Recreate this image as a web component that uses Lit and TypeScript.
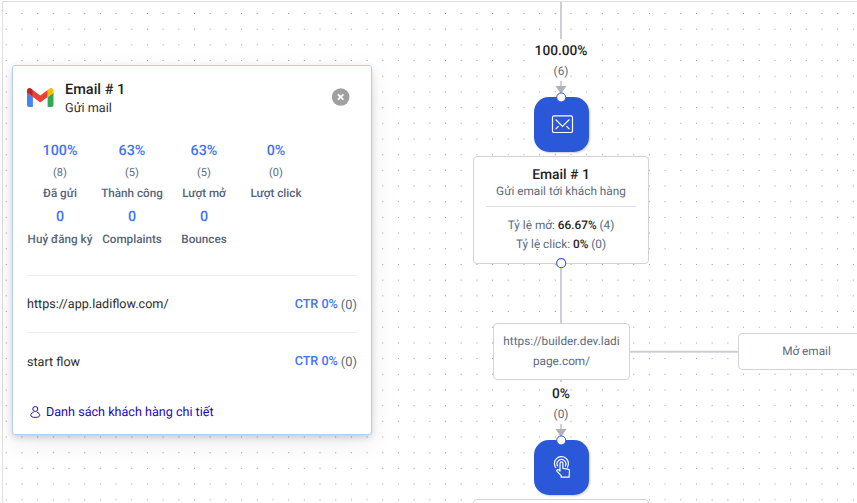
import { LitElement, html, css, svg } from "lit";
import { customElement } from "lit/decorators.js";

const STEP = 15.686;

function dotPath(): string {
  let d = "";
  for (let r = 0; r < 32; r++) {
    for (let c = 0; c < 55; c++) {
      d += `M${(5.8 + c * STEP).toFixed(2)} ${(13.5 + r * STEP).toFixed(2)}h1`;
    }
  }
  return d;
}

const STATS = [
  { value: "100%", count: "(8)", label: "Đã gửi" },
  { value: "63%", count: "(5)", label: "Thành công" },
  { value: "63%", count: "(5)", label: "Lượt mở" },
  { value: "0%", count: "(0)", label: "Lượt click" },
];
const TOTALS = [
  { value: "0", label: "Huỷ đăng ký" },
  { value: "0", label: "Complaints" },
  { value: "0", label: "Bounces" },
];
const LINKS = ["https://app.ladiflow.com/", "start flow"];

@customElement("stats-panel")
class StatsPanel extends LitElement {
  static styles = css`
    :host {
      display: block;
      box-sizing: border-box;
      width: 360px;
      height: 370px;
      padding: 0 14px;
      border: 1px solid #b5cdfb;
      border-radius: 3px;
      background: #fff;
      box-shadow: 0 3px 7px -1px rgba(50, 60, 90, 0.25), 0 8px 28px rgba(0, 0, 0, 0.07);
    }
    .head { display: flex; height: 62px; align-items: center; }
    .logo { width: 26.5px; height: 20px; margin: 0 11.5px 1px 0; }
    .titles { flex: 1; padding-top: 4px; }
    .title { font-size: 14.5px; font-weight: 500; line-height: 18px; color: #1e1e1e; }
    .sub { font-size: 12.7px; line-height: 19px; color: #333; }
    .close { width: 18px; height: 18px; margin-right: 7px; }
    .row { display: grid; grid-template-columns: repeat(4, 72px); justify-content: start; margin-left: -3px; text-align: center; }
    .first { padding-top: 12px; }
    .value { font-size: 14.3px; font-weight: 500; line-height: 22px; color: #3f74f6; }
    .count { font-size: 11px; line-height: 22px; color: #5b6b80; }
    .label { font-size: 11.7px; font-weight: 500; line-height: 20px; color: #56657a; white-space: nowrap; }
    .first .label { line-height: 19px; }
    .totals { padding-top: 3px; }
    .totals .label { line-height: 23px; }
    .link { display: flex; height: 56px; align-items: center; justify-content: space-between; border-top: 1px solid #ededed; font-size: 12.6px; color: #2b2b2b; }
    .link > span { padding-top: 1px; }
    .link:last-child > .name { padding-top: 3px; }
    .links { margin-top: 24px; }
    .ctr { display: flex; align-items: center; gap: 3px; color: #5b6b80; }
    .ctr b { font-weight: 500; line-height: 16px; color: #3f74f6; }
    .ctr .n { padding-top: 2px; line-height: 16px; font-size: 12.9px; }
    .detail { display: flex; align-items: center; height: 18px; margin-top: 14px; padding-left: 2px; gap: 4px; font-size: 12.6px; color: #1c07b8; }
    .detail svg { width: 13px; height: 14px; }
  `;
  render() {
    return html`
      <div class="head">
        <svg class="logo" viewBox="0 0 27 21" preserveAspectRatio="none">
          <path d="M0 6l6 4.500V21H2a2 2 0 0 1-2-2z" fill="#4285f4" />
          <path d="M27 6l-6 4.500V21h4a2 2 0 0 0 2-2z" fill="#34a853" />
          <path d="M21 3.200L23 1.600c1.700-1.300 4-.1 4 2V6l-6 4.600z" fill="#fbbc04" />
          <path d="M6 3.200l7.500 5.700L21 3.200v7.400l-7.500 5.600L6 10.600z" fill="#ea4335" />
          <path d="M6 3.200L4 1.600C2.300.3 0 1.500 0 3.600V6l6 4.600z" fill="#c5221f" />
        </svg>
        <div class="titles">
          <div class="title">Email # 1</div>
          <div class="sub">Gửi mail</div>
        </div>
        <svg class="close" viewBox="0 0 18 18">
          <circle cx="8.700" cy="9" r="8.800" fill="#a0a0a0" />
          <path d="M6 6.300l5.400 5.400m0-5.400l-5.400 5.400" stroke="#fff" stroke-width="1.800" />
        </svg>
      </div>
      <div class="row first">
        ${STATS.map((s) => html`<div>
          <div class="value">${s.value}</div>
          <div class="count">${s.count}</div>
          <div class="label">${s.label}</div>
        </div>`)}
      </div>
      <div class="row totals">
        ${TOTALS.map((s) => html`<div>
          <div class="value">${s.value}</div>
          <div class="label">${s.label}</div>
        </div>`)}
      </div>
      <div class="links">
        ${LINKS.map((l) => html`<div class="link"><span class="name">${l}</span><span class="ctr"><b>CTR 0%</b><span class="n">(0)</span></span></div>`)}
      </div>
      <div class="detail">
        <svg viewBox="0 0 13 14" fill="none" stroke="#1c07b8">
          <circle cx="6.300" cy="4" r="2.500" />
          <path d="M4.600 7.200C3 7.800 1.800 8.900 1.800 10.300c0 2.800 9 2.800 9 0 0-1.400-1.200-2.500-2.800-3.100" />
        </svg>
        <span>Danh sách khách hàng chi tiết</span>
      </div>
    `;
  }
}

@customElement("app-root")
class AppRoot extends LitElement {
  static styles = css`
    :host {
      display: block;
      position: relative;
      width: 857px;
      height: 503px;
      overflow: hidden;
      background: #fff;
      font-family: Roboto, "Liberation Sans", sans-serif;
      text-rendering: geometricPrecision;
    }
    .board, .panel, .node, .tile, .branch { position: absolute; }
    .board { left: 0; top: 0; width: 857px; height: 503px; }
    .panel { left: 12px; top: 65px; }
    .node { box-sizing: border-box; background: #fff; border: 1px solid #d0d4da; border-radius: 4px; text-align: center; font-size: 11.8px; color: #5b6b80; }
    .mail { left: 473px; top: 155.5px; width: 176px; height: 108px; padding: 9px 12px 0; }
    .mail h3 { margin: 0; font-size: 13.9px; font-weight: 500; line-height: 18px; color: #1e1e1e; }
    .mail .desc { line-height: 15px; padding-bottom: 7px; border-bottom: 1px solid #dcdfe3; }
    .rates { padding-top: 9px; line-height: 19px; }
    .rates b { font-weight: 500; color: #1e1e1e; }
    .url { left: 493px; top: 323px; width: 137px; height: 57px; padding-top: 7px; line-height: 20px; }
    .open { left: 738px; top: 333px; width: 137px; height: 37px; line-height: 35px; }
    .next { left: 473px; top: 499px; width: 176px; height: 60px; }
    .branch { left: 521px; width: 80px; text-align: center; }
    .branch.one { top: 41px; }
    .branch.two { top: 384px; }
    .branch > div { width: fit-content; margin: 0 auto; background: #fff; }
    .pct { font-size: 13.7px; font-weight: 500; line-height: 21px; color: #1e1e1e; }
    .num { font-size: 11.8px; line-height: 18px; color: #5b6b80; }
    .tile { left: 534px; width: 54.5px; height: 54.5px; border-radius: 15px; background: #2a58d8; box-shadow: 1px 1px 2px rgba(0, 0, 0, 0.2); }
    .tile.one { top: 97px; }
    .tile.two { top: 440px; }
    .tile svg { display: block; width: 54px; height: 54px; }
  `;
  render() {
    return html`
      <svg class="board" viewBox="0 0 857 503" fill="none">
        <path d=${dotPath()} stroke="#9c9c9c" />
        <path d="M2.500 1.500V503M2 1.500H857" stroke="#dcdee2" />
        <path d="M561 2V39M561 263V324M561 380v2" stroke="#cdcfd5" stroke-width="2" />
        <path d="M630 351.700H738" stroke="#cdd0d6" stroke-width="2" />
      </svg>
      <div class="branch one"><div class="pct">100.00%</div><div class="num">(6)</div></div>
      <div class="branch two"><div class="pct">0%</div><div class="num">(0)</div></div>
      <div class="tile one">
        <svg viewBox="0 0 54 54" fill="none" stroke="#fff" stroke-width="1.200">
          <rect x="18.500" y="18.900" width="20" height="16.600" rx="1.600" />
          <path d="M21.600 22.500l6.900 6.900 6.900-6.900M21.600 32.100l3-3M35.400 32.100l-3-3" />
        </svg>
      </div>
      <div class="tile two">
        <svg viewBox="0 0 54 54" fill="none" stroke="#fff" stroke-width="1.200" stroke-linejoin="round">
          <path d="M26 31v-7.600c0-2 2.900-2 2.900 0v5l5 .8c1.100.2 1.600.9 1.600 2l-.3 4.300v1.700h-8v-1.500l-4.200-4.300c-.8-1.100.7-2.400 1.700-1.600z" />
          <path d="M23.800 26.400a4.400 4.400 0 1 1 7.300 0M22 28.100a7 7 0 1 1 11.200-.5" />
        </svg>
      </div>
      <div class="node mail">
        <h3>Email # 1</h3>
        <div class="desc">Gửi email tới khách hàng</div>
        <div class="rates">
          <div>Tỷ lệ mở: <b>66.67%</b> (4)</div>
          <div>Tỷ lệ click: <b>0%</b> (0)</div>
        </div>
      </div>
      <div class="node url">https://builder.dev.ladi<br />page.com/</div>
      <div class="node open">Mở email</div>
      <div class="node next"></div>
      <svg class="board" viewBox="0 0 857 503">
        ${[97, 440].map((y) => svg`
          <path d=${`M561 ${y - 16}v7`} stroke="#d0d2d8" stroke-width="2" />
          <path d=${`M555.500 ${y - 11}h11l-5.500 8z`} fill="#b1b1b7" />
          <circle cx="561.200" cy=${y + 0.4} r="4.500" fill="#fff" stroke="#2a58d8" />`)}
        <circle cx="561.200" cy="263.200" r="4.500" fill="#fff" stroke="#3a65dc" stroke-width="1.200" />
      </svg>
      <stats-panel class="panel"></stats-panel>
    `;
  }
}
